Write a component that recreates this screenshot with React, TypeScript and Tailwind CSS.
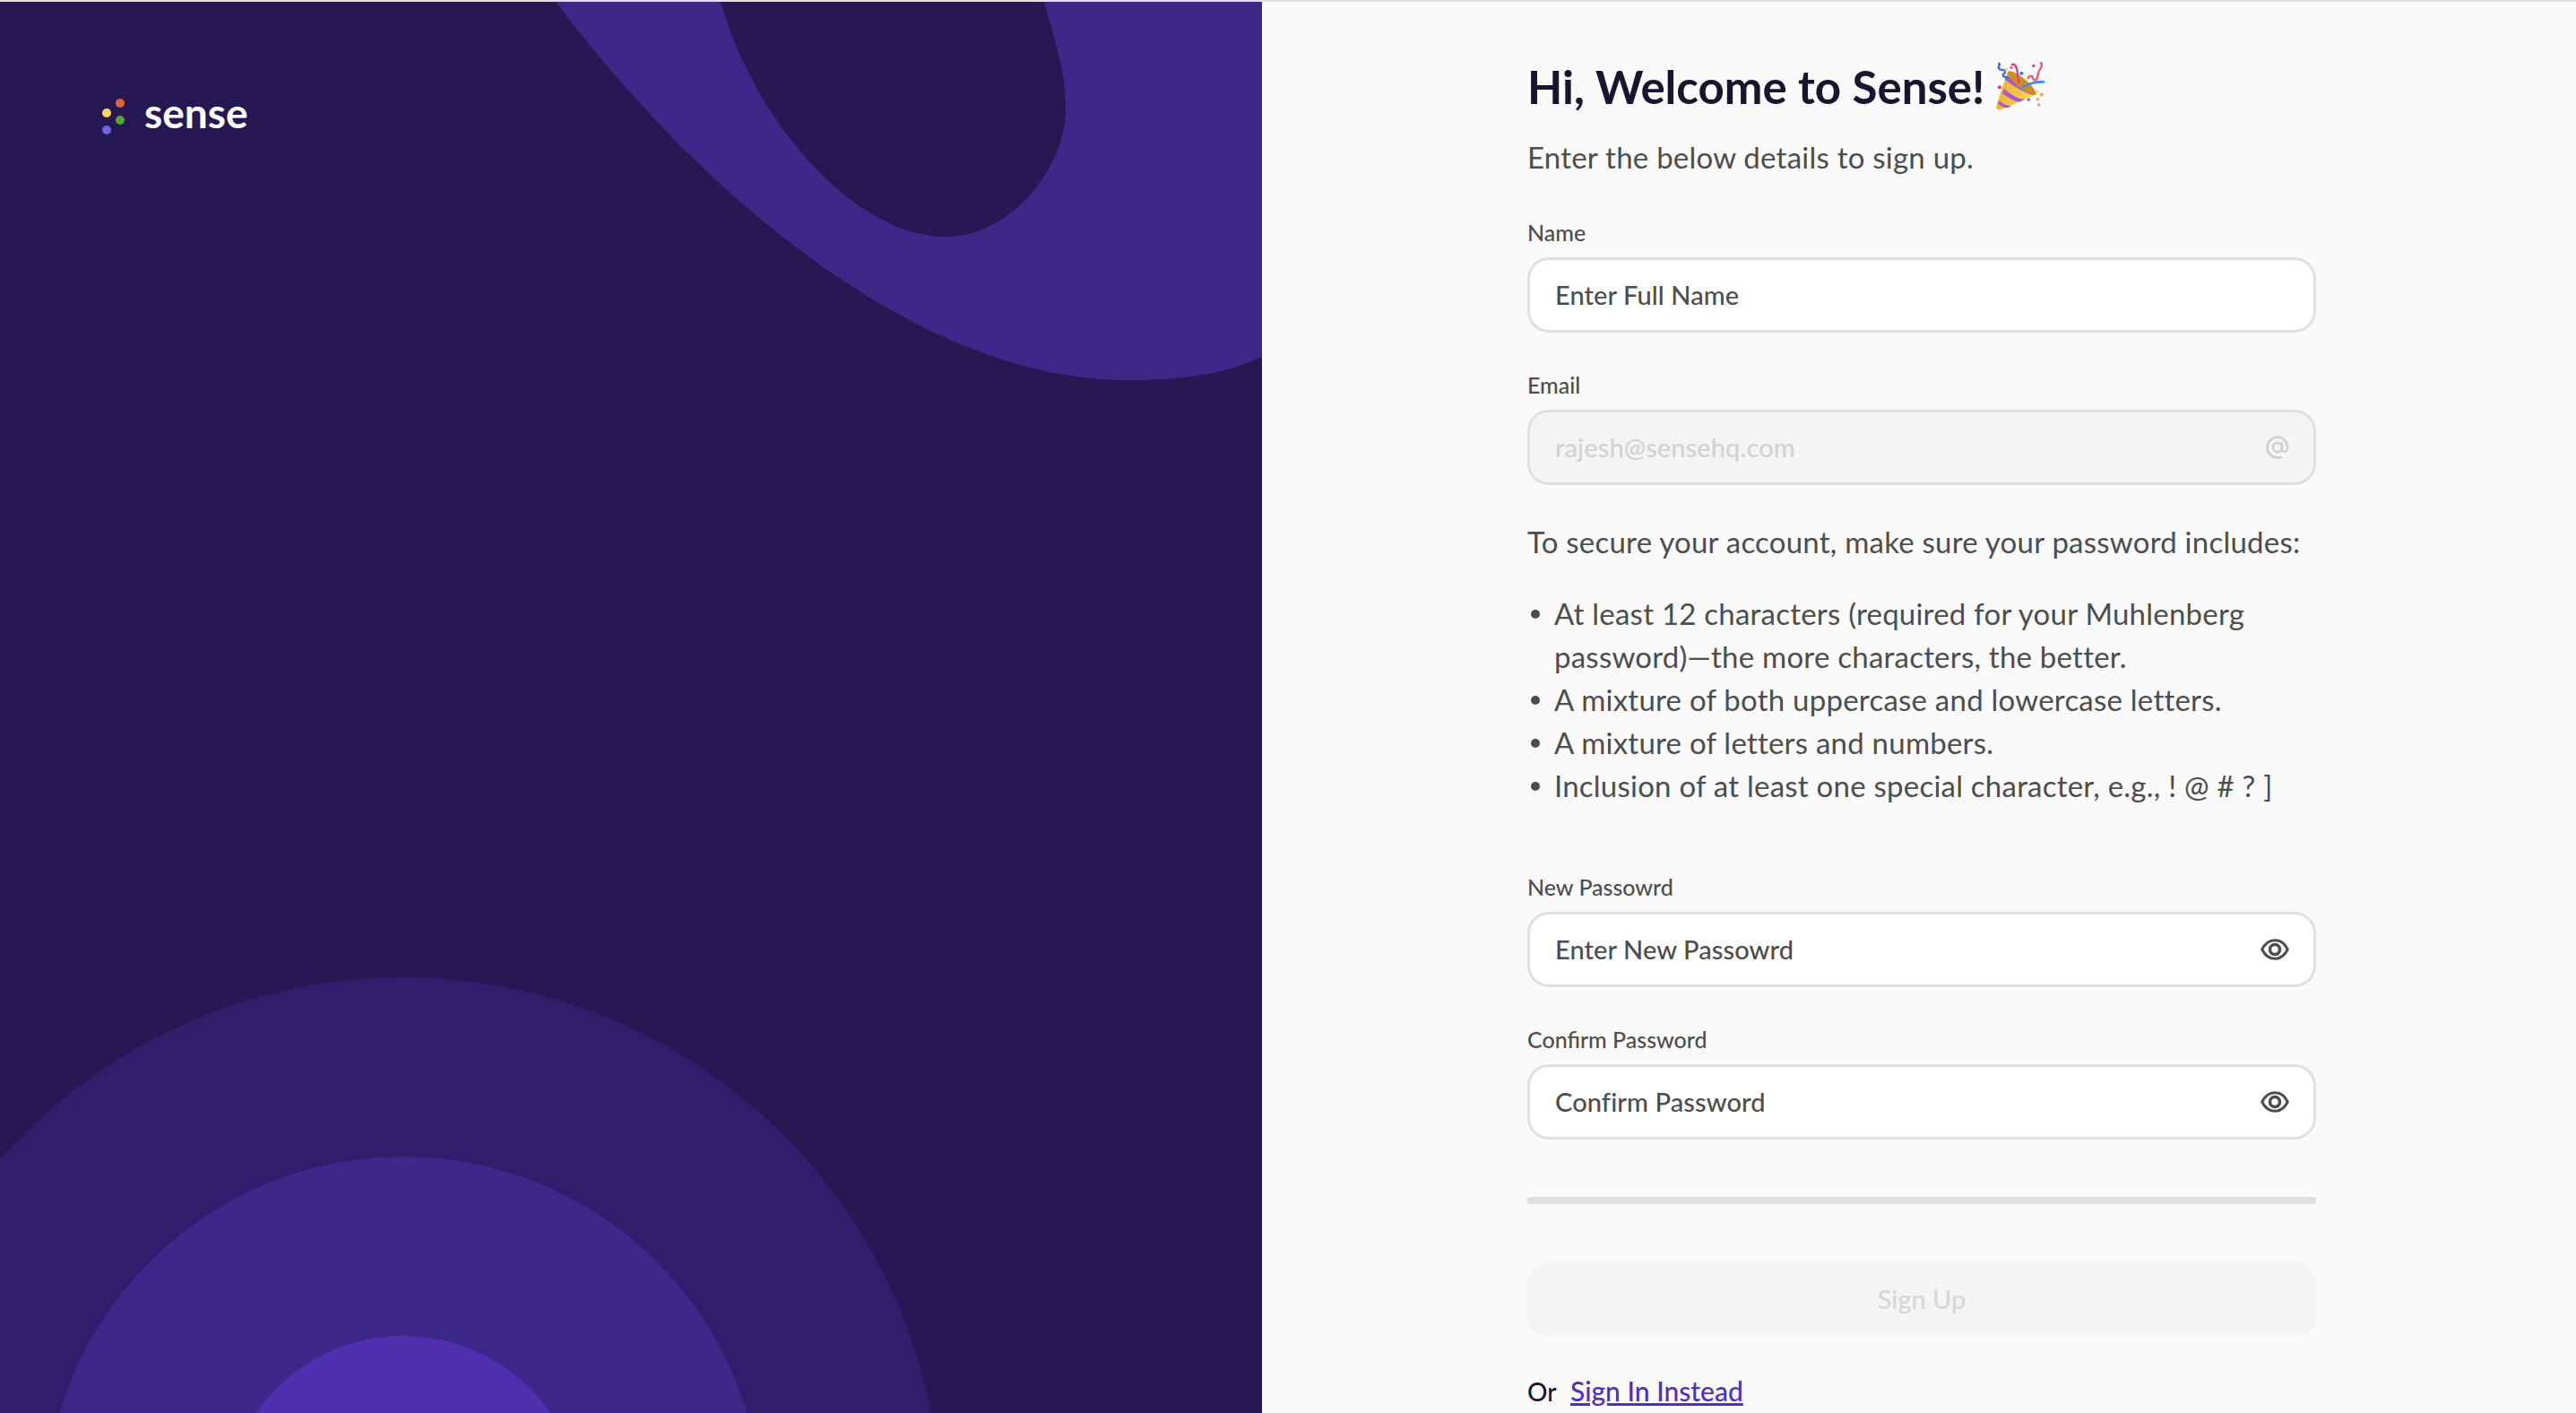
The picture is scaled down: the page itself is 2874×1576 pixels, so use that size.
const PartyPopper = () => (
  <svg viewBox="50 25 165 165" className="ml-[12px] h-[57px] w-[57px] shrink-0">
    <defs>
      <linearGradient id="cone" x1="0" y1="0" x2="1" y2="0.4">
        <stop offset="0" stopColor="#e9a92d" />
        <stop offset="1" stopColor="#f7d45a" />
      </linearGradient>
    </defs>
    <path d="M56 178c-4-4-2-12 1-22L91 56l92 74-106 46c-9 4-17 6-21 2z" fill="url(#cone)" />
    <path d="M78 112c20 16 44 34 68 34l-15 8c-22-2-40-16-58-28z" fill="#a757cf" />
    <path d="M63 150c14 12 26 18 40 17l-13 6c-12 0-21-6-31-13z" fill="#a757cf" />
    <path d="M88 70c22 18 50 40 78 50l14 8-8 5c-34-10-68-34-92-52z" fill="#a757cf" />
    <path d="M92 56c8-6 38 10 62 32 18 16 30 36 28 42-4 8-34-6-60-28-22-18-36-40-30-46z" fill="#c98f25" />
    <path d="M62 30c8 6-8 10 2 18s14-2 18 8c2 8-10 6-6 14 2 6 12 2 16 6" fill="none" stroke="#3b6fe0" strokeWidth="7" strokeLinecap="round" />
    <path d="M104 34c12-6 16 12 18 26l4 32" fill="none" stroke="#e8406e" strokeWidth="7" strokeLinecap="round" />
    <path d="M140 106c22-12 42-18 66-16" fill="none" stroke="#3d8ae8" strokeWidth="8" strokeLinecap="round" />
    <path d="M156 78c6-12 14-8 16 0s10 10 14-2 2-18 8-26 8-18 4-22" fill="none" stroke="#ea5c80" strokeWidth="7" strokeLinecap="round" />
    <circle cx="85" cy="50" r="5" fill="#f3d34a" />
    <circle cx="102" cy="44" r="5" fill="#e86aa0" />
    <circle cx="135" cy="62" r="6" fill="#3b7be8" />
    <circle cx="174" cy="38" r="5" fill="#e8407a" />
    <circle cx="64" cy="107" r="6" fill="#e8406e" />
    <circle cx="184" cy="122" r="5" fill="#f3d34a" />
    <circle cx="200" cy="131" r="6" fill="#f2a65a" />
    <circle cx="187" cy="146" r="5" fill="#f2a65a" />
    <circle cx="158" cy="147" r="5" fill="#3b7be8" />
    <circle cx="191" cy="164" r="5" fill="#f08aa8" />
  </svg>
);

const EyeIcon = () => (
  <svg viewBox="0 0 32 24" className="h-[24px] w-[32px]" fill="none" stroke="#4d4d4d" strokeWidth="3">
    <path d="M1.700 12C5 5.500 10 1.700 16 1.700S27 5.500 30.300 12C27 18.500 22 22.300 16 22.300S5 18.500 1.700 12z" strokeLinejoin="round" />
    <circle cx="16" cy="12" r="5.500" strokeWidth="3.500" />
    <circle cx="17.300" cy="10.700" r="1.700" fill="#ffffff" stroke="none" />
  </svg>
);

const AtIcon = () => (
  <svg viewBox="0 0 26 26" className="h-[26px] w-[26px]" fill="none" stroke="#d0d0d0" strokeWidth="2.600" strokeLinecap="round">
    <circle cx="13" cy="13" r="5" />
    <path d="M18 8.500v6c0 2 1 3.200 2.700 3.200s3.300-1.700 3.300-4.700C24 6.500 19 1.500 13 1.500S1.500 6.500 1.500 13 6.500 24.500 13 24.500c1.600 0 2.500-.2 3.500-.5" />
  </svg>
);

type FieldProps = {
  label: string;
  placeholder: string;
  disabled?: boolean;
  icon?: React.ReactNode;
  className?: string;
};

const Field = ({ label, placeholder, disabled, icon, className }: FieldProps) => (
  <div className={className}>
    <label className="block h-[32px] text-[25px] leading-[32px] font-medium text-[#4d4d4d]">{label}</label>
    <div
      className={`mt-[12px] flex h-[84px] items-center rounded-[24px] border-[3px] border-[#e0e0e0] pr-[27px] pl-[28px] ${
        disabled ? 'bg-[#f4f4f4]' : 'bg-white'
      }`}
    >
      <input
        disabled={disabled}
        placeholder={placeholder}
        className={`min-w-0 flex-1 bg-transparent text-[29px] font-medium tracking-[0.1px] outline-none ${
          disabled ? 'placeholder:text-[#d2d2d2]' : 'placeholder:text-[#4d4d4d]'
        }`}
      />
      {icon}
    </div>
  </div>
);

const rules = [
  'At least 12 characters (required for your Muhlenberg password)—the more characters, the better.',
  'A mixture of both uppercase and lowercase letters.',
  'A mixture of letters and numbers.',
  'Inclusion of at least one special character, e.g., ! @ # ? ]',
];

export default function App() {
  return (
    <div className="flex h-[1576px] w-full overflow-hidden border-t-2 border-[#e0e0e0] font-['Lato',sans-serif]">
      <aside className="relative w-[1408px] shrink-0 overflow-hidden bg-[#261852]">
        <svg viewBox="0 0 1408 1574" className="absolute inset-0 h-full w-full">
          <g transform="translate(0 -2)">
            <path d="M620 2C800 240 1040 424 1257 424C1310 424 1360 420 1408 398V2Z" fill="#3d288a" />
            <path d="M804 2C840 130 950 264 1056 264C1125 264 1189 190 1189 120C1189 80 1178 50 1165 2Z" fill="#261852" />
            <circle cx="450" cy="1690" r="600" fill="#2e1e6b" />
            <circle cx="450" cy="1690" r="400" fill="#3c2889" />
            <circle cx="450" cy="1690" r="200" fill="#4e30ae" />
          </g>
        </svg>
        <div className="relative flex items-center gap-[21px] pt-[108px] pl-[114px]">
          <svg viewBox="0 0 26 42" className="h-[42px] w-[26px]">
            <circle cx="20" cy="5" r="5" fill="#e0623a" />
            <circle cx="5" cy="16" r="5" fill="#fbd567" />
            <circle cx="20" cy="24" r="5" fill="#55a636" />
            <circle cx="5" cy="35" r="5" fill="#6f63e0" />
          </svg>
          <span className="-mt-[10px] text-[46px] leading-[46px] font-bold text-white">sense</span>
        </div>
      </aside>

      <main className="flex-1 bg-[#fafafa] pl-[296px]">
        <div className="w-[880px]">
          <h1 className="mt-[60px] flex h-[70px] items-center text-[51px] font-bold text-[#16162e]">
            Hi, Welcome to Sense!
            <PartyPopper />
          </h1>
          <p className="mt-[19px] text-[33px] leading-[48px] tracking-[0.23px] text-[#4d4d4d]">
            Enter the below details to sign up.
          </p>

          <Field className="mt-[44px]" label="Name" placeholder="Enter Full Name" />
          <Field className="mt-[42px]" label="Email" placeholder="rajesh@sensehq.com" disabled icon={<AtIcon />} />

          <p className="mt-[39px] text-[33px] leading-[48px] tracking-[0.23px] text-[#4d4d4d]">
            To secure your account, make sure your password includes:
          </p>
          <ul className="mt-[32px] flex flex-col text-[33px] leading-[48px] tracking-[0.23px] text-[#4d4d4d]">
            {rules.map((rule) => (
              <li key={rule} className="flex">
                <span className="mt-[20px] mr-[16px] ml-[4px] h-[10px] w-[10px] shrink-0 rounded-full bg-[#4d4d4d]" />
                <span>{rule}</span>
              </li>
            ))}
          </ul>

          <Field className="mt-[73px]" label="New Passowrd" placeholder="Enter New Passowrd" icon={<EyeIcon />} />
          <Field className="mt-[42px]" label="Confirm Password" placeholder="Confirm Password" icon={<EyeIcon />} />

          <div className="mt-[64px] h-[8px] rounded-full bg-[#e0e0e0]" />

          <button className="mt-[64px] h-[84px] w-full rounded-[24px] bg-[#f4f4f4] text-[29px] font-medium text-[#d6d6d6]">
            Sign Up
          </button>

          <p className="mt-[36px] text-[28px] leading-[48px] font-medium text-[#16162e]">
            Or <a className="ml-[9px] text-[30px] text-[#4f30b8] underline">Sign In Instead</a>
          </p>
        </div>
      </main>
    </div>
  );
}
